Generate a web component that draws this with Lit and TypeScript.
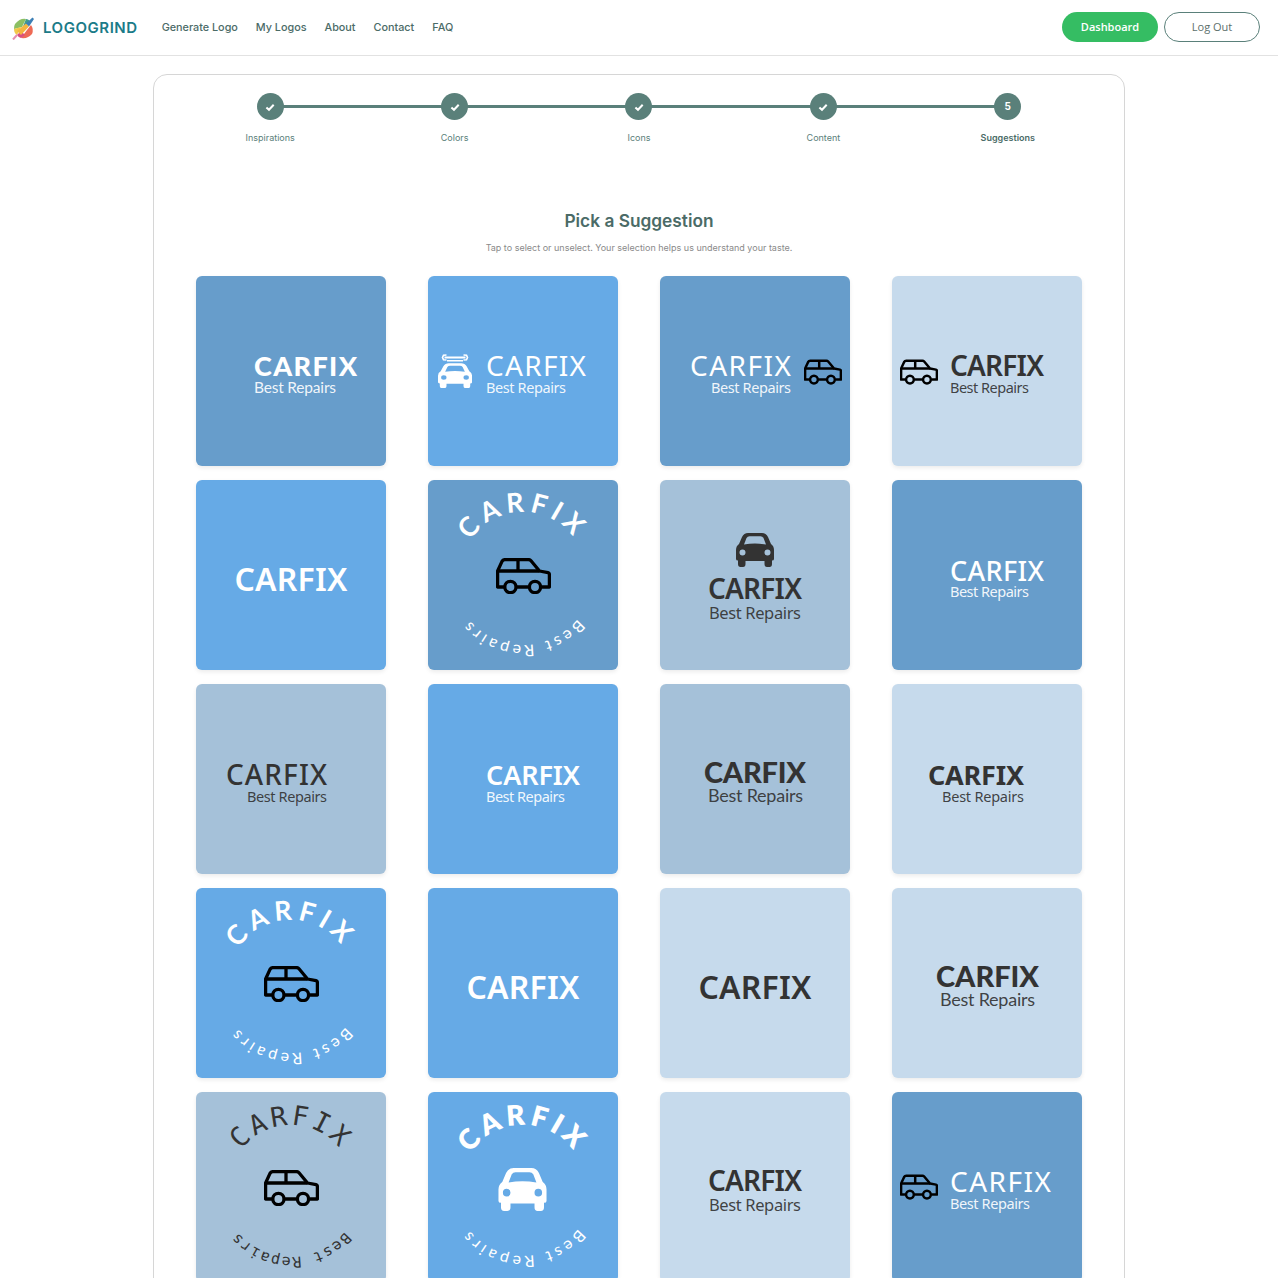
import { LitElement, html, svg, css } from "lit";
import { customElement } from "lit/decorators.js";

type T = [string, number, number, number, number, number?]; // text, x, baseline, size, weight, width
interface Logo {
  bg: string;
  ink: string;
  font: string;
  lines?: T[];
  icon?: [string, number, number, number, number, string];
  arc?: { topSize: number; topR: number; topLs: number; botSize: number; botR: number; botLs: number; weight: number };
}

const B1 = "#679dcb", B2 = "#66aae6", L = "#c6daec", M = "#a5c1d9", W = "#ffffff", D = "#333333";
const N = "noto", H = "hand", K = "mono";
const two = (x1: number, y1: number, w1: number, x2: number, y2: number, w2: number, s1: number, wt: number, s2 = 14.5): T[] => [
  ["CARFIX", x1, y1, s1, wt, w1],
  ["Best Repairs", x2, y2, s2, 400, w2],
];
const SANS_ARC = { topSize: 27, topR: 63, topLs: 5, botSize: 16, botR: 70, botLs: 3.2, weight: 700 };

const LOGOS: Logo[] = [
  { bg: B1, ink: W, font: H, lines: two(58, 100, 103, 58, 117, 82, 27, 900, 15.5) },
  { bg: B2, ink: W, font: N, lines: two(58, 100, 100, 58, 117, 80, 28, 400), icon: ["wrench", 10, 78, 34, 34, W] },
  { bg: B1, ink: W, font: N, lines: two(30, 100, 101, 51, 117, 80, 28, 400), icon: ["suv", 144, 83, 38, 26, "#000"] },
  { bg: L, ink: D, font: N, lines: two(58, 100, 94, 58, 117, 79, 28, 600), icon: ["suv", 8, 83, 38, 26, "#000"] },

  { bg: B2, ink: W, font: N, lines: [["CARFIX", 38.5, 111, 32, 600, 113]] },
  { bg: B1, ink: W, font: H, icon: ["suv", 68, 78, 55, 36, "#000"], arc: SANS_ARC },
  { bg: M, ink: D, font: N, lines: two(48, 119, 94, 49, 139, 92, 28, 600, 16.5), icon: ["front", 76, 53, 38, 34, D] },
  { bg: B1, ink: W, font: N, lines: two(58, 101, 94, 58, 117, 79, 27, 500) },

  { bg: M, ink: D, font: N, lines: two(30, 101, 101, 51, 118, 80, 28, 500) },
  { bg: B2, ink: W, font: N, lines: two(58, 101, 94, 58, 118, 79, 27, 600) },
  { bg: M, ink: D, font: H, lines: [["CARFIX", 44, 99, 29, 900, 102], ["Best Repairs", 48, 118, 18, 400, 95]] },
  { bg: L, ink: D, font: N, lines: two(36, 101, 96, 50, 118, 82, 27, 700) },

  { bg: B2, ink: W, font: H, icon: ["suv", 68, 78, 55, 36, "#000"], arc: SANS_ARC },
  { bg: B2, ink: W, font: N, lines: [["CARFIX", 38.5, 111, 32, 600, 113]] },
  { bg: L, ink: D, font: N, lines: [["CARFIX", 38.5, 111, 32, 600, 113]] },
  { bg: L, ink: D, font: H, lines: [["CARFIX", 44, 99, 29, 900, 103], ["Best Repairs", 48, 118, 18, 400, 95]] },

  { bg: M, ink: D, font: K, icon: ["suv", 68, 78, 55, 36, "#000"], arc: { topSize: 27, topR: 62, topLs: 3, botSize: 15, botR: 70, botLs: 1.2, weight: 400 } },
  { bg: B2, ink: W, font: H, icon: ["front", 70, 76, 49, 43, W], arc: { topSize: 28, topR: 62, topLs: 4, botSize: 16, botR: 69, botLs: 3.4, weight: 800 } },
  { bg: L, ink: D, font: N, lines: two(48, 99, 94, 49, 119, 92, 28, 600, 16.5) },
  { bg: B1, ink: W, font: N, lines: two(58, 100, 101, 58, 117, 80, 28, 400), icon: ["suv", 8, 82, 38, 26, "#000"] },
];

const iconBody = (name: string, x: number, y: number, w: number, h: number, c: string) => {
  if (name === "suv") {
    const sw = w < 50 ? 3.6 : 3.3;
    return svg`<svg x=${x} y=${y} width=${w} height=${h} viewBox="0 0 55 36" fill="none" stroke=${c} stroke-width=${sw} stroke-linejoin="round">
      <path d="M8.2 29H1.6V13L6 3.4Q7 1.6 9 1.6H32.5Q34 1.6 35 2.8L43.5 13L52 14.6Q53.4 15 53.4 16.5V29H45.5"/>
      <path d="M20.5 29H32.5M1.6 13H43.5M22 1.6V13"/>
      <circle cx="14.4" cy="29" r="5.6"/><circle cx="39" cy="29" r="5.6"/></svg>`;
  }
  const car = "M12 0H26Q30 0 32 4L35 11Q38 13 38 17V26Q38 27.5 36 27.5V31Q36 34 33.5 34H31Q28.5 34 28.5 31V28H9.5V31Q9.5 34 7 34H4.5Q2 34 2 31V27.5Q0 27.5 0 26V17Q0 13 3 11L6 4Q8 0 12 0ZM8 11.5Q19 9.5 30 11.5L27.5 5Q26.5 3.3 24.5 3.3H13.5Q11.5 3.3 10.5 5ZM6.5 16.5A3 3 0 1 0 6.5 22.5A3 3 0 1 0 6.5 16.5ZM31.5 16.5A3 3 0 1 0 31.5 22.5A3 3 0 1 0 31.5 16.5Z";
  if (name === "front") {
    return svg`<svg x=${x} y=${y} width=${w} height=${h} viewBox="0 0 38 34"><path d=${car} fill=${c} fill-rule="evenodd"/></svg>`;
  }
  return svg`<svg x=${x} y=${y} width=${w} height=${h} viewBox="0 0 34 34">
    <g transform="translate(0 9.2) scale(.895 .735)"><path d=${car} fill=${c} fill-rule="evenodd"/></g>
    <path d="M6.5 3.5H27.5" stroke=${c} stroke-width="2.2" fill="none"/>
    <path d="M8.5 1L5.5 1.2L4.5 3.5L5.5 5.8L8.5 6M25.5 1L28.5 1.2L29.5 3.5L28.5 5.8L25.5 6" stroke=${c} stroke-width="1.6" fill="none"/>
    <path d="M9 6.8H25" stroke=${c} stroke-width="1.4" fill="none"/></svg>`;
};

const CHECK = html`<svg class="check" viewBox="0 0 10 10"><path d="M1.4 5.4L4 7.8L8.7 2.8" fill="none" stroke="#fff" stroke-width="2"/></svg>`;

@customElement("logo-tile")
export class LogoTile extends LitElement {
  static properties = { logo: { attribute: false }, uid: { type: Number } };
  declare logo: Logo;
  declare uid: number;
  static styles = css`
    :host { display: block; width: 190px; height: 190px; }
    .tile { display: block; width: 190px; height: 190px; border-radius: 6px; box-shadow: 0 2px 4px rgba(0,0,0,.08); }
    .noto { font-family: "Noto Sans", sans-serif; }
    .hand { font-family: "Lato", sans-serif; }
    .mono { font-family: "DejaVu Sans Mono", monospace; }
  `;
  render() {
    const l = this.logo;
    const a = l.arc;
    return html`<svg class="tile ${l.font}" viewBox="0 0 190 190" style="background:${l.bg}">
      ${l.icon ? iconBody(...l.icon) : ""}
      ${(l.lines ?? []).map(([t, x, y, s, w, len]) => svg`<text x=${x} y=${y} font-size=${s} font-weight=${w} fill=${l.ink} fill-opacity=${s < 20 ? 0.92 : 1} textLength=${len ?? ""}>${t}</text>`)}
      ${a ? svg`
        <path id="t${this.uid}" d="M${95 - a.topR} 95A${a.topR} ${a.topR} 0 0 1 ${95 + a.topR} 95" fill="none"/>
        <path id="b${this.uid}" d="M${95 + a.botR} 95A${a.botR} ${a.botR} 0 0 1 ${95 - a.botR} 95" fill="none"/>
        <text font-size=${a.topSize} font-weight=${a.weight} fill=${l.ink} text-anchor="middle" letter-spacing=${a.topLs}><textPath href="#t${this.uid}" startOffset="50%">CARFIX</textPath></text>
        <text font-size=${a.botSize} fill=${l.ink} text-anchor="middle" letter-spacing=${a.botLs}><textPath href="#b${this.uid}" startOffset="50%">Best Repairs</textPath></text>` : ""}
    </svg>`;
  }
}

@customElement("app-root")
export class AppRoot extends LitElement {
  static styles = css`
    :host { display: block; height: 1278px; overflow: hidden; background: #fff; font-family: "Inter", sans-serif; }
    header { height: 55px; box-sizing: content-box; border-bottom: 1px solid #e2e2e2; display: flex; align-items: center; padding: 0 18px 0 12px; }
    .bar { display: flex; align-items: center; flex: 1; margin-top: -2px; }
    .brand { display: flex; align-items: center; gap: 7px; margin-top: 2px; font-size: 15px; font-weight: 600; letter-spacing: .55px; color: #1b7b88; }
    .brand svg { width: 24px; height: 24px; display: block; }
    nav { display: flex; gap: 18px; margin: 1px 0 0 24px; font-size: 10.8px; font-weight: 500; color: #4b6b67; }
    .actions { margin-left: auto; display: flex; gap: 6px; font-family: "Open Sans", sans-serif; font-size: 11px; }
    .btn { width: 96px; height: 30px; box-sizing: border-box; border-radius: 15px; display: flex; align-items: center; justify-content: center; }
    .primary { background: #35bd63; color: #fff; font-weight: 600; }
    .ghost { border: 1px solid #5a807a; color: #5c6f6c; }
    main { display: flex; justify-content: center; padding-top: 18px; }
    .panel { width: 972px; box-sizing: border-box; border: 1px solid #d6d6d6; border-radius: 14px; padding: 18px 24px 40px; }
    .steps { display: grid; grid-template-columns: repeat(5, 1fr); }
    .step { position: relative; display: flex; flex-direction: column; align-items: center; gap: 12px; font-size: 9px; line-height: 11px; color: #5a807a; }
    .step.cur { font-weight: 600; color: #4b6b67; }
    .step:not(:last-child)::after { content: ""; position: absolute; left: 50%; width: 100%; top: 12px; height: 3px; background: #5a807a; }
    .dot { position: relative; z-index: 1; width: 27px; height: 27px; border-radius: 50%; background: #5a807a; color: #fff; font-size: 10px; font-weight: 700; display: flex; align-items: center; justify-content: center; }
    .check { width: 10px; height: 10px; }
    h1 { margin: 66px 0 0; text-align: center; font-size: 17.3px; line-height: 24px; font-weight: 600; color: #4b6b67; }
    .sub { margin: 9px 0 0; text-align: center; font-size: 9px; line-height: 11px; color: #8a8a8a; }
    .grid { margin-top: 23px; display: grid; grid-template-columns: repeat(4, 190px); gap: 14px 42px; justify-content: center; }
  `;
  render() {
    const steps = ["Inspirations", "Colors", "Icons", "Content", "Suggestions"];
    return html`
      <header>
        <div class="bar">
          <div class="brand">
            <svg viewBox="0 0 24 24">
              <path d="M3 8Q8 2 14 3L10 11L2 13Q1.8 10 3 8Z" fill="#8cbf63"/>
              <path d="M2 13L9 11L5 19Q2 17 2 13Z" fill="#f2c84b"/>
              <path d="M14 3Q16 3 18 5L10 13Z" fill="#3f9a8c"/>
              <path d="M19 9Q22 13 20 18Q16 23 9 22L15 14Z" fill="#ee6a55"/>
              <path d="M5 19L9 15L13 19L9 22Q6.5 21.5 5 19Z" fill="#d94f7f"/>
              <path d="M5 15L14 7.5L17 10.5L9 19Z" fill="#f4b53f"/>
              <path d="M14 7.5L20.5 1.5L22 3L17 10.5Z" fill="#3c7fb5"/>
              <path d="M5 19L1 23.5" stroke="#e58fb0" stroke-width="2" fill="none"/>
            </svg>
            LOGOGRIND
          </div>
          <nav><span>Generate Logo</span><span>My Logos</span><span>About</span><span>Contact</span><span>FAQ</span></nav>
          <div class="actions"><div class="btn primary">Dashboard</div><div class="btn ghost">Log Out</div></div>
        </div>
      </header>
      <main>
        <section class="panel">
          <div class="steps">
            ${steps.map((s, i) => html`<div class="step ${i === 4 ? "cur" : ""}"><div class="dot">${i < 4 ? CHECK : "5"}</div><span>${s}</span></div>`)}
          </div>
          <h1>Pick a Suggestion</h1>
          <p class="sub">Tap to select or unselect. Your selection helps us understand your taste.</p>
          <div class="grid">
            ${LOGOS.map((l, i) => html`<logo-tile .logo=${l} .uid=${i}></logo-tile>`)}
          </div>
        </section>
      </main>
    `;
  }
}
